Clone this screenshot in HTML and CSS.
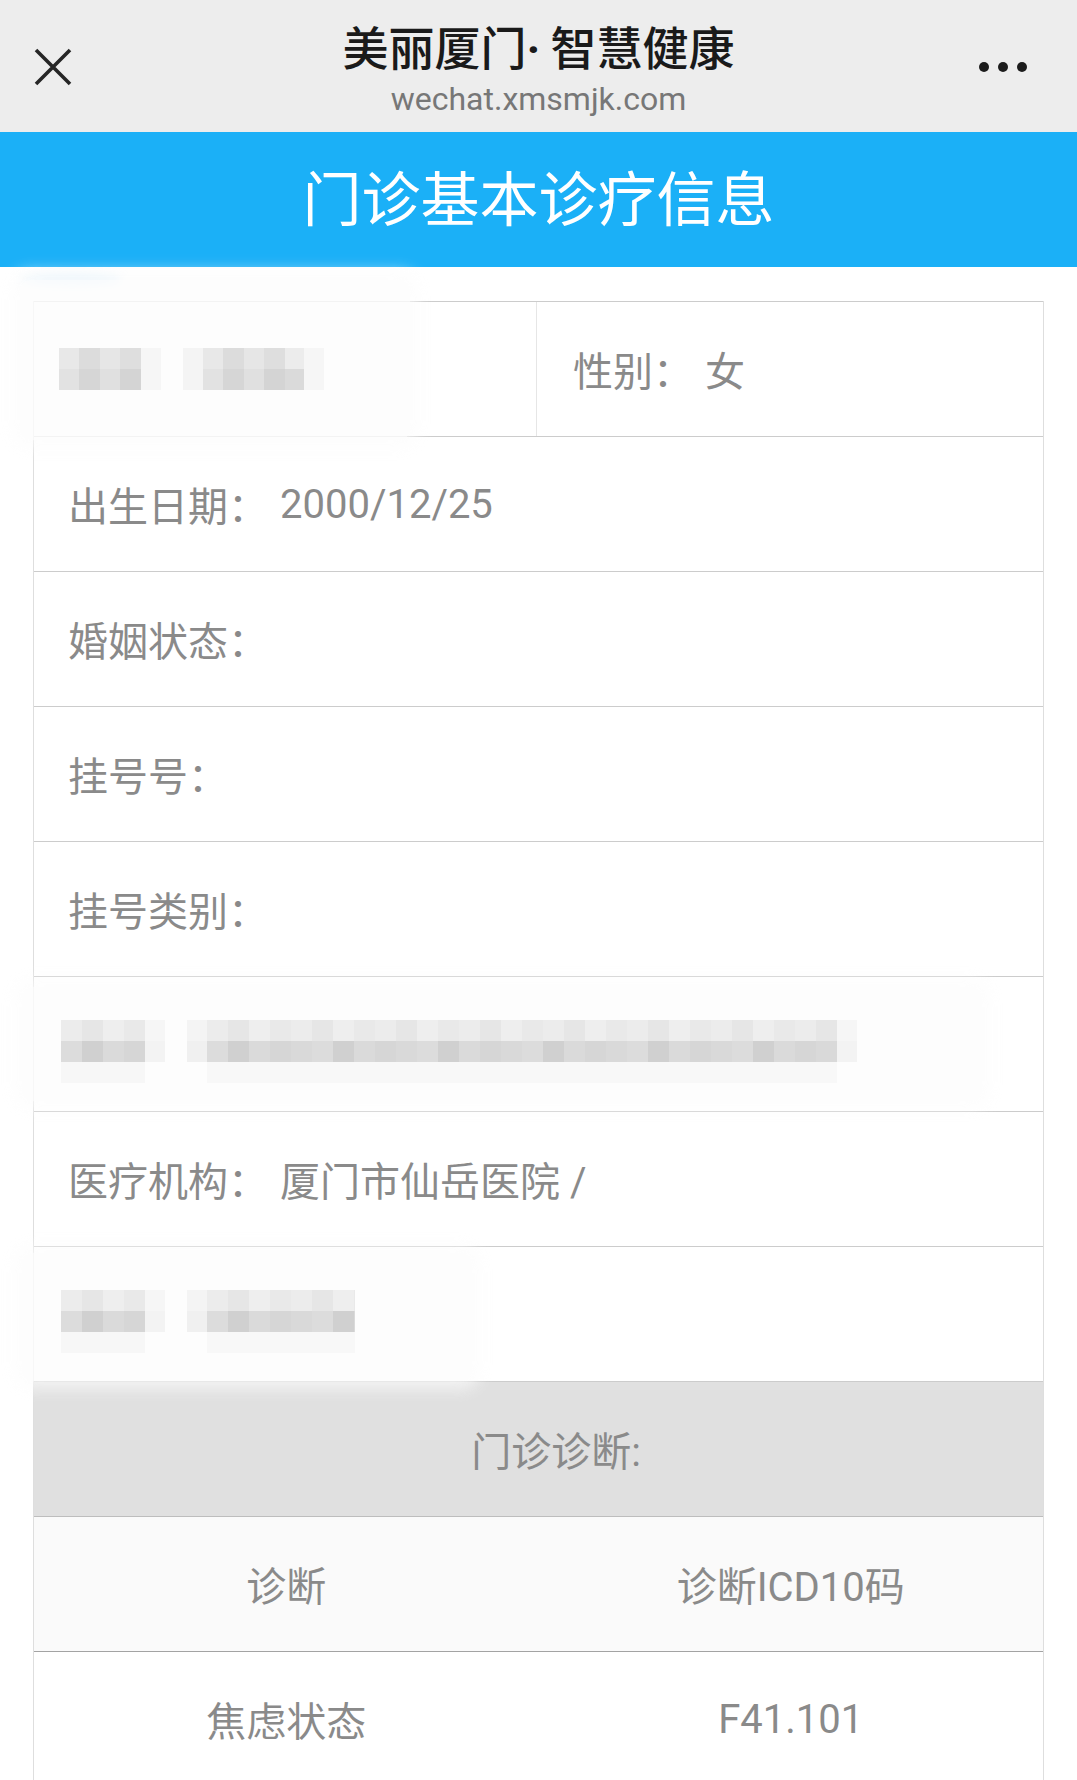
FILE: index.html
```html
<!DOCTYPE html>
<html lang="zh-CN">
<head>
<meta charset="utf-8">
<title>门诊基本诊疗信息</title>
<link rel="stylesheet" href="styles.css">
</head>
<body>
<div class="page">
  <header class="topbar">
    <div class="close">
      <svg width="38" height="38" viewBox="0 0 38 38"><path d="M2 2 L36 36 M36 2 L2 36" stroke="#262626" stroke-width="3.6" fill="none"/></svg>
    </div>
    <div class="titles">
      <div class="t1">美丽厦门<span class="dot">·</span> 智慧健康</div>
      <div class="t2">wechat.xmsmjk.com</div>
    </div>
    <div class="more"><span></span><span></span><span></span></div>
  </header>

  <div class="banner">门诊基本诊疗信息</div>

  <main class="content">
    <div class="table">
      <div class="row split">
        <div class="cell blurcell">
          <div class="haze haze-name"></div>
          <div class="mosaic m-name">
            <div class="seg s1"><div class="a"></div><div class="b"></div></div>
            <div class="seg s2"><div class="a"></div><div class="b"></div></div>
          </div>
        </div>
        <div class="cell">性别：<span class="val">女</span></div>
      </div>
      <div class="row"><div class="cell">出生日期：<span class="val">2000/12/25</span></div></div>
      <div class="row"><div class="cell">婚姻状态：</div></div>
      <div class="row"><div class="cell">挂号号：</div></div>
      <div class="row"><div class="cell">挂号类别：</div></div>
      <div class="row blurrow">
        <div class="haze haze-wide"></div>
        <div class="cell">
          <div class="mosaic m-long">
            <div class="seg s1"><div class="a"></div><div class="b"></div></div>
            <div class="seg s2"><div class="a"></div><div class="b"></div></div>
          </div>
        </div>
      </div>
      <div class="row"><div class="cell">医疗机构：<span class="val">厦门市仙岳医院 /</span></div></div>
      <div class="row blurrow">
        <div class="haze haze-short"></div>
        <div class="cell">
          <div class="mosaic m-short">
            <div class="seg s1"><div class="a"></div><div class="b"></div></div>
            <div class="seg s2"><div class="a"></div><div class="b"></div></div>
          </div>
        </div>
      </div>
      <div class="row head"><div class="cell">门诊诊断:</div></div>
      <div class="row cols sub">
        <div class="col">诊断</div>
        <div class="col">诊断ICD10码</div>
      </div>
      <div class="row cols data">
        <div class="col">焦虑状态</div>
        <div class="col">F41.101</div>
      </div>
    </div>
  </main>
</div>
</body>
</html>
```

FILE: styles.css
```css
* { box-sizing: border-box; }
html, body { margin: 0; padding: 0; background: #fff; }
body {
  font-family: Roboto, "Noto Sans CJK SC", sans-serif;
  width: 1077px;
  overflow: hidden;
}

/* top navigation */
.topbar {
  height: 132px;
  background: #ededed;
  display: grid;
  grid-template-columns: 1fr auto 1fr;
  align-items: center;
}
.close {
  justify-self: start;
  margin-left: 34px;
  width: 38px;
  height: 38px;
  margin-top: 2px;
}
.close svg { display: block; }
.titles {
  align-self: start;
  text-align: center;
  padding-top: 16px;
}
.t1 {
  font-family: "Noto Sans CJK SC", sans-serif;
  font-size: 46px;
  line-height: 58px;
  font-weight: 500;
  color: #1a1a1a;
  white-space: nowrap;
}
.t1 .dot {
  font-family: Roboto, sans-serif;
  font-weight: 700;
}
.t2 {
  font-family: Roboto, sans-serif;
  font-size: 32px;
  line-height: 40px;
  margin-top: 1px;
  color: #777;
}
.more {
  justify-self: end;
  margin-right: 50px;
  display: flex;
  gap: 9px;
  margin-top: 2px;
}
.more span {
  width: 10px;
  height: 10px;
  border-radius: 50%;
  background: #1c1c1c;
}

/* blue banner */
.banner {
  height: 135px;
  line-height: 128px;
  background: #1bb0f7;
  color: #fff;
  text-align: center;
  font-family: "Noto Sans CJK SC", sans-serif;
  font-size: 59px;
  font-weight: 400;
}

/* content table */
.content {
  position: relative;
  padding: 34px 33px 0 33px;
}
.content::before {
  content: "";
  position: absolute;
  left: 22px;
  top: 7px;
  width: 100px;
  height: 12px;
  border-radius: 50%;
  background: rgba(170, 215, 245, 0.35);
  filter: blur(4px);
}
.table {
  border-left: 1px solid #dedede;
  border-right: 1px solid #dedede;
  color: #8a8a8a;
  font-size: 40px;
}
.row {
  position: relative;
  height: 135px;
  border-top: 1px solid #cccccc;
  display: flex;
  align-items: center;
}
.cell {
  position: relative;
  display: flex;
  align-items: center;
  height: 100%;
  padding-left: 34px;
  white-space: nowrap;
}
.val { margin-left: 12px; }
.split .cell:first-child {
  width: 503px;
  border-right: 1px solid #e6e6e6;
  padding-left: 25px;
}
.split .cell:last-child {
  padding-left: 36px;
}

/* header rows */
.head { background: #e0e0e0; }
.head .cell {
  width: 100%;
  justify-content: center;
  padding-left: 35px;
}
.cols .col {
  flex: 1;
  text-align: center;
}
.sub {
  background: #fafafa;
  border-top-color: #bdbdbd;
}
.data {
  border-top-color: #a3a3a3;
}

/* pixelated (blurred) personal data */
.haze {
  position: absolute;
  z-index: 1;
  background: rgba(252, 252, 252, 0.8);
  box-shadow: 0 0 16px 8px rgba(252, 252, 252, 0.7);
  border-radius: 10px;
}
.haze-name { left: -14px; top: -22px; width: 390px; height: 160px; }
.haze-wide { left: -12px; top: 10px; width: 960px; height: 114px; }
.haze-short { left: -12px; top: 6px; width: 450px; height: 128px; }
.blurrow .cell { padding-left: 27px; }

.mosaic {
  position: relative;
  z-index: 2;
  display: flex;
  gap: 62px;
}
.seg { display: flex; flex-direction: column; }
.seg .a, .seg .b { height: 21px; }
.seg .a {
  background: repeating-linear-gradient(90deg, #e8e8e8 0 20px, #dcdcdc 20px 41px, #e6e6e6 41px 61px, #dedede 61px 82px, #ececec 82px 102px, #e2e2e2 102px 123px);
}
.seg .b {
  background: repeating-linear-gradient(90deg, #e2e2e2 0 20px, #d6d6d6 20px 41px, #e0e0e0 41px 61px, #d4d4d4 61px 82px, #dadada 82px 102px, #d8d8d8 102px 123px);
}
.seg.s1 .a, .seg.s1 .b { box-shadow: 20px 0 0 #f6f6f6; }
.seg.s2 .a, .seg.s2 .b { box-shadow: -20px 0 0 #f4f4f4, 20px 0 0 #f6f6f6; }

.m-name .s1 { width: 82px; }
.m-name .s2 { width: 101px; }

.m-long, .m-short { margin-top: -6px; }
.m-long .s1, .m-short .s1 { width: 84px; }
.m-long .s2 { width: 630px; }
.m-short .s2 { width: 148px; }
.m-long .a, .m-short .a {
  background: repeating-linear-gradient(90deg, #ececec 0 21px, #e6e6e6 21px 42px, #eeeeee 42px 63px, #e9e9e9 63px 84px);
}
.m-long .b, .m-short .b {
  box-shadow: 0 21px 0 #f8f8f8;
  background: repeating-linear-gradient(90deg, #dcdcdc 0 21px, #d0d0d0 21px 42px, #dadada 42px 63px, #d6d6d6 63px 84px, #d9d9d9 84px 105px);
}
.m-long .s1 .b, .m-short .s1 .b { box-shadow: 20px 0 0 #f3f3f3, 0 21px 0 #f7f7f7; }
.m-long .s2 .b, .m-short .s2 .b { box-shadow: -20px 0 0 #f0f0f0, 20px 0 0 #f3f3f3, 0 21px 0 #f8f8f8; }
.m-short .s2 .b { box-shadow: -20px 0 0 #f0f0f0, 0 21px 0 #f8f8f8; }
.m-short .s2 .a { box-shadow: -20px 0 0 #f4f4f4; }
```
